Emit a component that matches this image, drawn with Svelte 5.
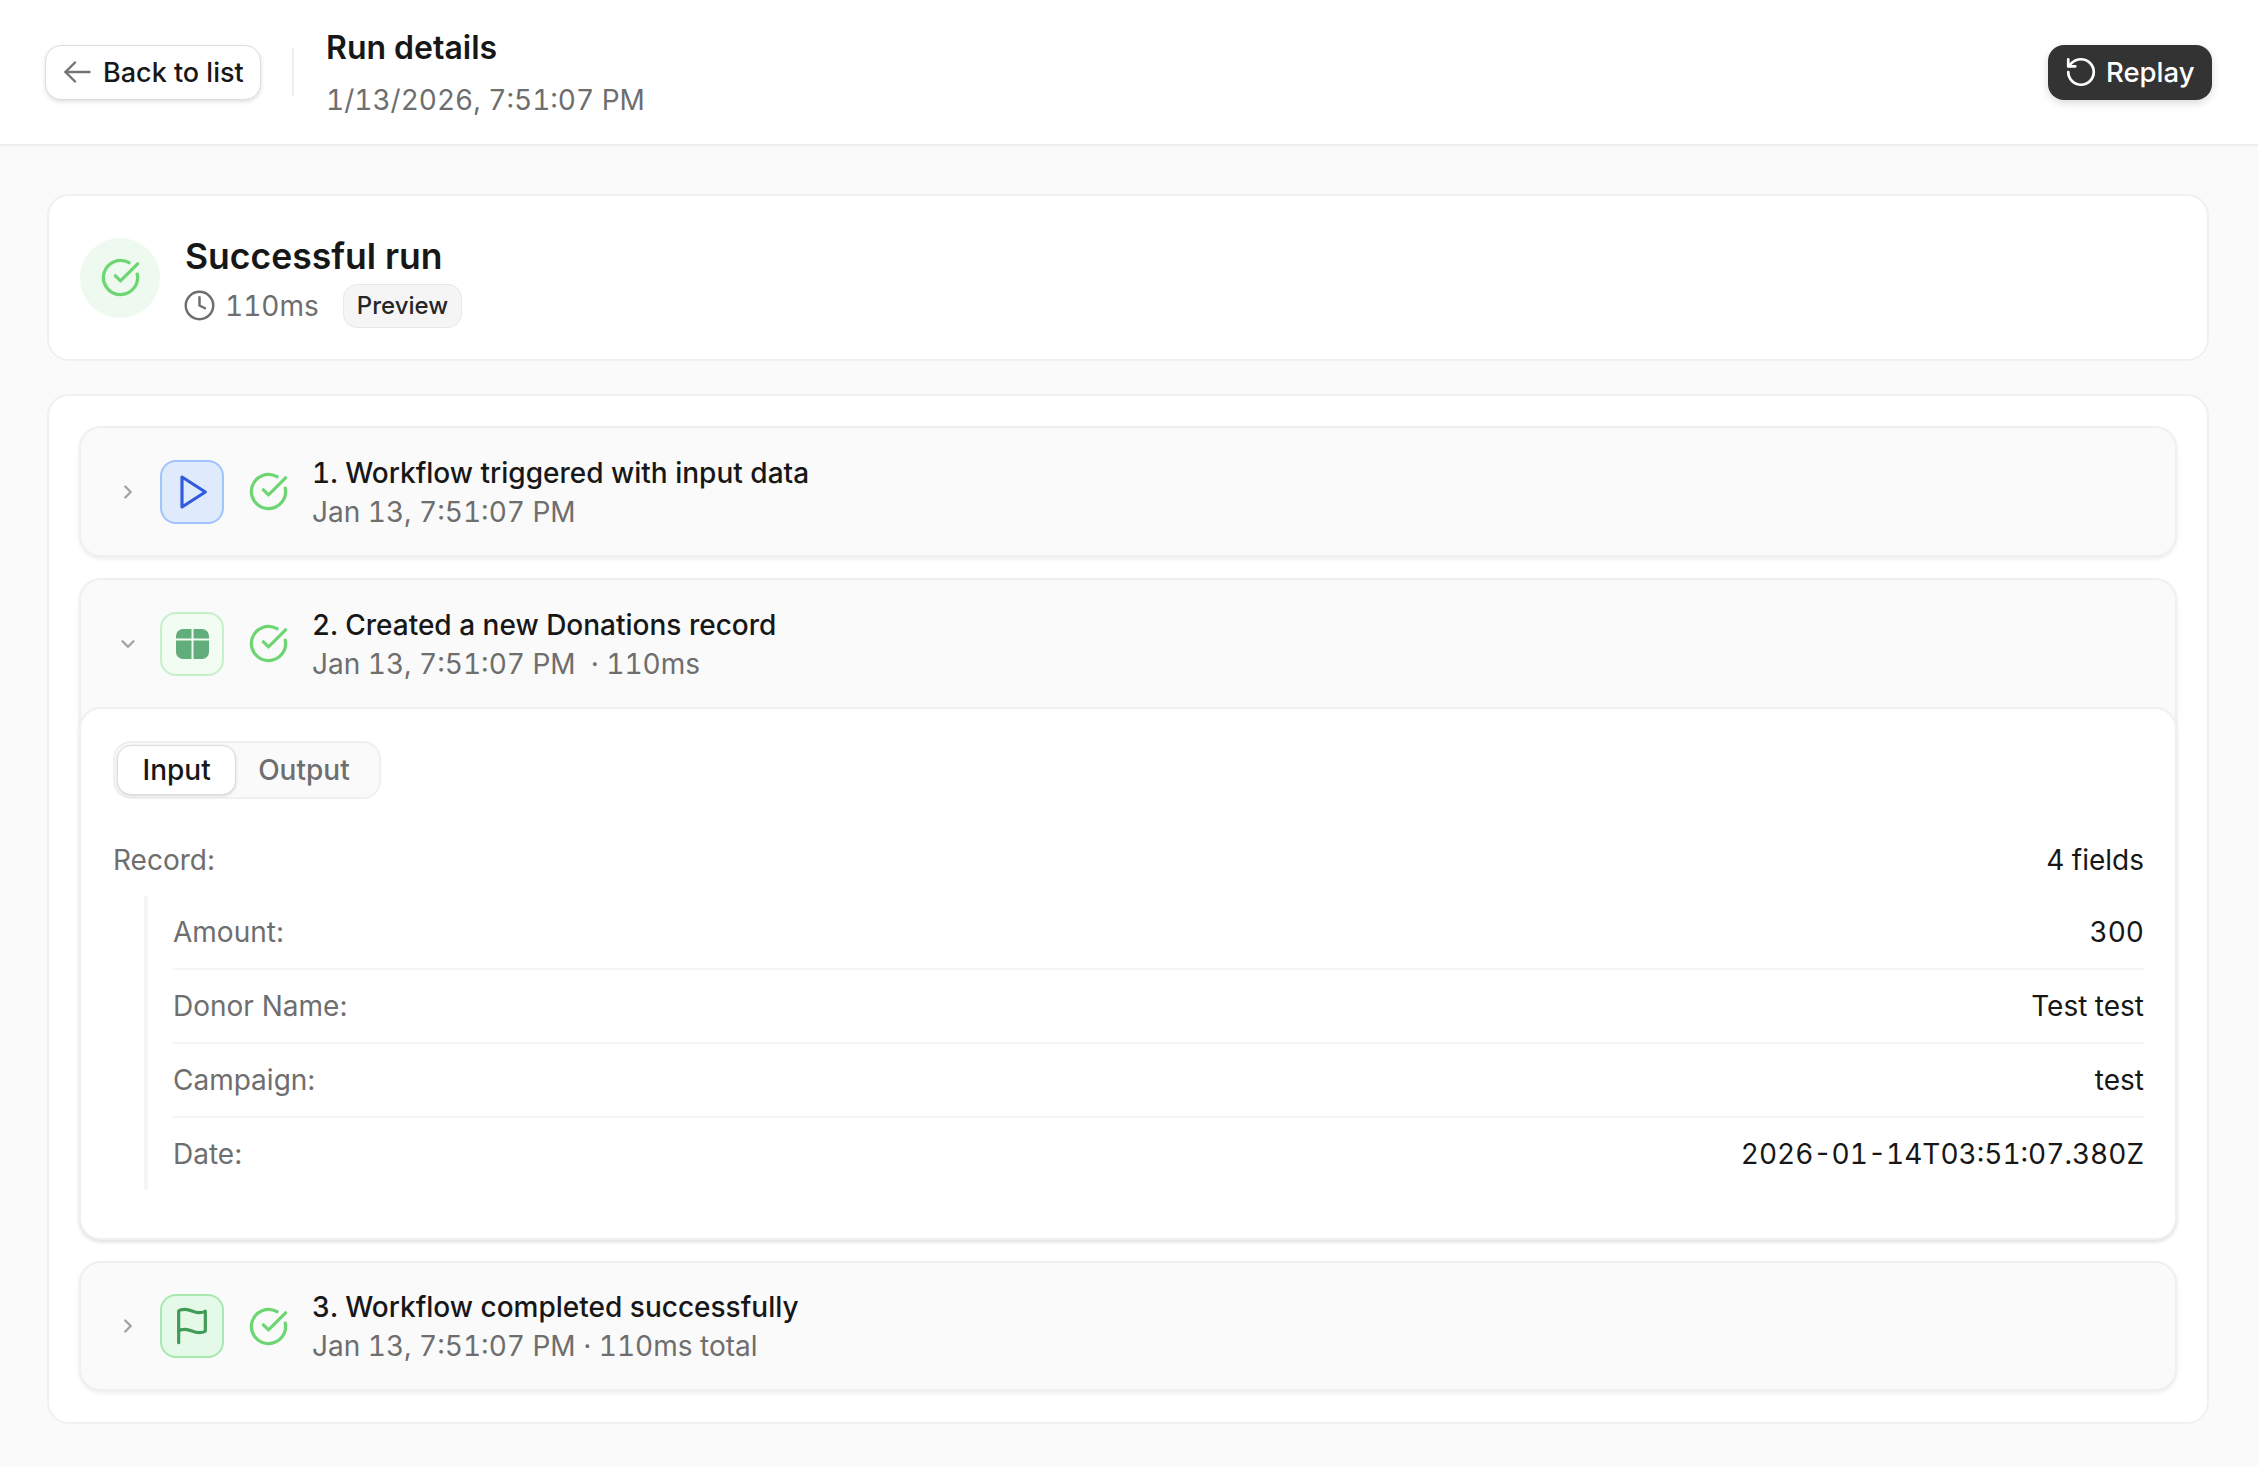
<script>
    let fields = [
        { label: "Amount:", value: "300" },
        { label: "Donor Name:", value: "Test test" },
        { label: "Campaign:", value: "test" },
        { label: "Date:", value: "2026-01-14T03:51:07.380Z" },
    ];
</script>

{#snippet check()}
    <svg class="check" viewBox="0 0 24 24" fill="none" stroke="currentColor" stroke-width="1.9" stroke-linecap="round" stroke-linejoin="round">
        <path d="M21.801 10A10 10 0 1 1 17 3.335" />
        <path d="m9 11 3 3L22 4" />
    </svg>
{/snippet}

<div class="page">
    <header class="topbar">
        <button class="back">
            <svg class="back-icon" viewBox="0 0 27 22" fill="none" stroke="currentColor" stroke-width="2.4" stroke-linecap="round" stroke-linejoin="round">
                <path d="M11 1.5 1.5 11l9.5 9.5" />
                <path d="M25.5 11H1.5" />
            </svg>
            Back to list
        </button>
        <div class="divider"></div>
        <div class="heading">
            <div class="heading-title">Run details</div>
            <div class="heading-date">1/13/2026, 7:51:07 PM</div>
        </div>
        <button class="replay">
            <svg class="replay-icon" viewBox="0 0 24 24" fill="none" stroke="currentColor" stroke-width="1.9" stroke-linecap="round" stroke-linejoin="round">
                <path d="M3 12a9 9 0 1 0 9-9 9.75 9.75 0 0 0-6.74 2.74L3 8" />
                <path d="M3 3v5h5" />
            </svg>
            Replay
        </button>
    </header>

    <main class="content">
        <section class="card summary">
            <div class="summary-icon">{@render check()}</div>
            <div class="summary-text">
                <div class="summary-title">Successful run</div>
                <div class="summary-meta">
                    <svg class="clock" viewBox="0 0 24 24" fill="none" stroke="currentColor" stroke-width="1.8" stroke-linecap="round" stroke-linejoin="round">
                        <circle cx="12" cy="12" r="10" />
                        <path d="M12 6v6l4 2" />
                    </svg>
                    <span class="duration">110ms</span>
                    <span class="badge">Preview</span>
                </div>
            </div>
        </section>

        <section class="card steps">
            <div class="step">
                <div class="step-head">
                    <svg class="chevron" viewBox="0 0 24 24" fill="none" stroke="currentColor" stroke-width="2.6" stroke-linecap="round" stroke-linejoin="round">
                        <path d="m9 18 6-6-6-6" />
                    </svg>
                    <div class="step-icon blue">
                        <svg viewBox="0 0 24 24" fill="none" stroke="currentColor" stroke-width="1.9" stroke-linecap="round" stroke-linejoin="round">
                            <polygon points="6 3 20 12 6 21 6 3" />
                        </svg>
                    </div>
                    {@render check()}
                    <div class="step-text">
                        <div class="step-title">1. Workflow triggered with input data</div>
                        <div class="step-sub">Jan 13, 7:51:07 PM</div>
                    </div>
                </div>
            </div>

            <div class="step">
                <div class="step-head">
                    <svg class="chevron" viewBox="0 0 24 24" fill="none" stroke="currentColor" stroke-width="2.6" stroke-linecap="round" stroke-linejoin="round">
                        <path d="m6 9 6 6 6-6" />
                    </svg>
                    <div class="step-icon soft-green">
                        <svg class="table-icon" viewBox="0 0 33 30">
                            <path d="M7 0h8.5v9.5H0V7a7 7 0 0 1 7-7z M17.5 0H26a7 7 0 0 1 7 7v2.5H17.5z M0 11.5h15.5V30H7a7 7 0 0 1-7-7z M17.5 11.5H33V23a7 7 0 0 1-7 7h-8.5z" fill="currentColor" />
                        </svg>
                    </div>
                    {@render check()}
                    <div class="step-text">
                        <div class="step-title">2. Created a new Donations record</div>
                        <div class="step-sub">Jan 13, 7:51:07 PM &nbsp;· 110ms</div>
                    </div>
                </div>
                <div class="step-body">
                    <div class="tabs">
                        <button class="tab active">Input</button>
                        <button class="tab">Output</button>
                    </div>
                    <div class="record-row">
                        <span class="label">Record:</span>
                        <span class="value">4 fields</span>
                    </div>
                    <div class="fields">
                        {#each fields as field}
                            <div class="field">
                                <span class="label">{field.label}</span>
                                <span class="value">{field.value}</span>
                            </div>
                        {/each}
                    </div>
                </div>
            </div>

            <div class="step">
                <div class="step-head last">
                    <svg class="chevron" viewBox="0 0 24 24" fill="none" stroke="currentColor" stroke-width="2.6" stroke-linecap="round" stroke-linejoin="round">
                        <path d="m9 18 6-6-6-6" />
                    </svg>
                    <div class="step-icon green">
                        <svg viewBox="0 0 24 24" fill="none" stroke="currentColor" stroke-width="1.9" stroke-linecap="round" stroke-linejoin="round">
                            <path d="M4 15s1-1 4-1 5 2 8 2 4-1 4-1V3s-1 1-4 1-5-2-8-2-4 1-4 1z" />
                            <line x1="4" y1="22" x2="4" y2="15" />
                        </svg>
                    </div>
                    {@render check()}
                    <div class="step-text">
                        <div class="step-title">3. Workflow completed successfully</div>
                        <div class="step-sub">Jan 13, 7:51:07 PM · 110ms total</div>
                    </div>
                </div>
            </div>
        </section>
    </main>
</div>

<style>
    :global(body) {
        margin: 0;
        background: #fafafa;
        font-family: Inter, "Liberation Sans", sans-serif;
        color: #171717;
    }

    button {
        font-family: inherit;
    }

    .page {
        min-height: 1466px;
        background: #fafafa;
    }

    .topbar {
        display: flex;
        align-items: center;
        box-sizing: border-box;
        height: 146px;
        padding: 0 46px 0 45px;
        background: #fff;
        border-bottom: 2px solid #eeeeee;
    }

    .back {
        display: flex;
        align-items: center;
        gap: 12px;
        box-sizing: border-box;
        width: 216px;
        height: 55px;
        padding: 0 0 0 18px;
        background: #fff;
        border: 1px solid #dcdcdc;
        border-radius: 16px;
        box-shadow: 0 2px 4px rgba(0, 0, 0, 0.12);
        font-size: 27px;
        font-weight: 500;
        color: #171717;
        white-space: nowrap;
    }

    .back-icon {
        width: 27px;
        height: 22px;
        color: #737373;
        flex-shrink: 0;
    }

    .divider {
        width: 2px;
        height: 48px;
        margin: 0 32px 0 31px;
        background: #eeeeee;
    }

    .heading {
        flex: 1;
        padding-top: 2px;
    }

    .heading-title {
        font-size: 32px;
        font-weight: 600;
        line-height: 40px;
    }

    .heading-date {
        margin-top: 13px;
        font-size: 28px;
        line-height: 38px;
        color: #6e6e6e;
        font-variant-numeric: tabular-nums;
    }

    .replay {
        display: flex;
        align-items: center;
        gap: 8px;
        box-sizing: border-box;
        width: 164px;
        height: 55px;
        padding: 0 0 0 16px;
        background: #333333;
        border: none;
        border-radius: 16px;
        box-shadow: 0 3px 8px rgba(0, 0, 0, 0.15);
        font-size: 27.5px;
        font-weight: 500;
        color: #fff;
    }

    .replay-icon {
        width: 34px;
        height: 34px;
        flex-shrink: 0;
    }

    .content {
        display: flex;
        flex-direction: column;
        gap: 33px;
        padding: 48px 49px 0 47px;
    }

    .card {
        background: #fff;
        border: 2px solid #f0f0f0;
        border-radius: 22px;
        box-sizing: border-box;
    }

    .summary {
        display: flex;
        align-items: center;
        gap: 25px;
        height: 167px;
        padding: 0 31px;
    }

    .summary-icon {
        display: flex;
        align-items: center;
        justify-content: center;
        width: 80px;
        height: 80px;
        border-radius: 50%;
        background: #eefaef;
    }

    .check {
        width: 41px;
        height: 41px;
        color: #6dd673;
        flex-shrink: 0;
    }

    .summary-text {
        padding-top: 7px;
    }

    .summary-title {
        font-size: 35.5px;
        font-weight: 600;
        line-height: 44px;
    }

    .summary-meta {
        display: flex;
        align-items: center;
        margin-top: 5px;
        color: #6e6e6e;
    }

    .clock {
        width: 33px;
        height: 33px;
        margin-left: -2px;
    }

    .duration {
        margin-left: 9px;
        font-size: 28px;
        font-variant-numeric: tabular-nums;
    }

    .badge {
        margin-left: 24px;
        box-sizing: border-box;
        height: 44px;
        padding: 0 13px;
        display: flex;
        align-items: center;
        background: #f5f5f5;
        border: 1px solid #e8e8e8;
        border-radius: 14px;
        font-size: 24px;
        font-weight: 500;
        color: #262626;
    }

    .steps {
        display: flex;
        flex-direction: column;
        gap: 21px;
        padding: 30px 30px 31px;
    }

    .step {
        background: #fafafa;
        border: 2px solid #f0f0f0;
        border-radius: 22px;
        box-shadow: 0 2px 4px rgba(0, 0, 0, 0.08);
    }

    .step-head {
        display: flex;
        align-items: center;
        height: 127px;
        padding-left: 36px;
    }

    .step-head.last {
        height: 126px;
    }

    .chevron {
        width: 22px;
        height: 22px;
        color: #a3a3a3;
        flex-shrink: 0;
    }

    .step-icon {
        display: flex;
        align-items: center;
        justify-content: center;
        box-sizing: border-box;
        width: 64px;
        height: 64px;
        margin: 0 24px 0 21px;
        border: 2px solid;
        border-radius: 16px;
    }

    .step-icon svg {
        width: 40px;
        height: 40px;
    }

    .step-icon .table-icon {
        width: 33px;
        height: 30px;
    }

    .blue {
        background: #dfeafd;
        border-color: #a0c4fb;
        color: #2f5be0;
    }

    .green {
        background: #e4f9e7;
        border-color: #a8e8ae;
        color: #3f9b56;
    }

    .soft-green {
        background: #f2fcf3;
        border-color: #c6f0ca;
        color: #61ad7b;
    }

    .step-text {
        margin-left: 23px;
        padding-top: 2px;
        font-variant-numeric: tabular-nums;
    }

    .step-title {
        font-size: 28px;
        font-weight: 500;
        line-height: 39px;
    }

    .step-sub {
        font-size: 28px;
        line-height: 39px;
        color: #6e6e6e;
    }

    .step-body {
        box-sizing: border-box;
        height: 533px;
        margin: 0 -2px -2px;
        padding: 32px 31px 0 32px;
        background: #fff;
        border: 2px solid #f0f0f0;
        border-radius: 22px;
        box-shadow: 0 2px 4px rgba(0, 0, 0, 0.06);
    }

    .tabs {
        display: inline-flex;
        align-items: center;
        box-sizing: border-box;
        height: 58px;
        padding: 0 2px;
        background: #fafafa;
        border: 2px solid #f0f0f0;
        border-radius: 18px;
    }

    .tab {
        height: 50px;
        padding: 0 26px 0 21px;
        background: none;
        border: 1px solid transparent;
        border-radius: 14px;
        font-size: 28px;
        font-weight: 500;
        color: #6e6e6e;
    }

    .tab.active {
        padding: 0 24.5px;
        background: #fff;
        border-color: #dcdcdc;
        box-shadow: 0 1px 3px rgba(0, 0, 0, 0.15);
        color: #171717;
    }

    .record-row,
    .field {
        display: flex;
        justify-content: space-between;
        align-items: center;
        font-size: 28px;
    }

    .record-row {
        margin-top: 41px;
        line-height: 40px;
    }

    .label {
        color: #6e6e6e;
    }

    .value {
        color: #171717;
        font-variant-numeric: tabular-nums;
    }

    .fields {
        margin: 16px 0 0 31px;
        padding-left: 25px;
        border-left: 4px solid #f5f5f5;
    }

    .field {
        height: 72px;
        border-bottom: 2px solid #f5f5f5;
    }

    .field:last-child {
        border-bottom: none;
    }
</style>
